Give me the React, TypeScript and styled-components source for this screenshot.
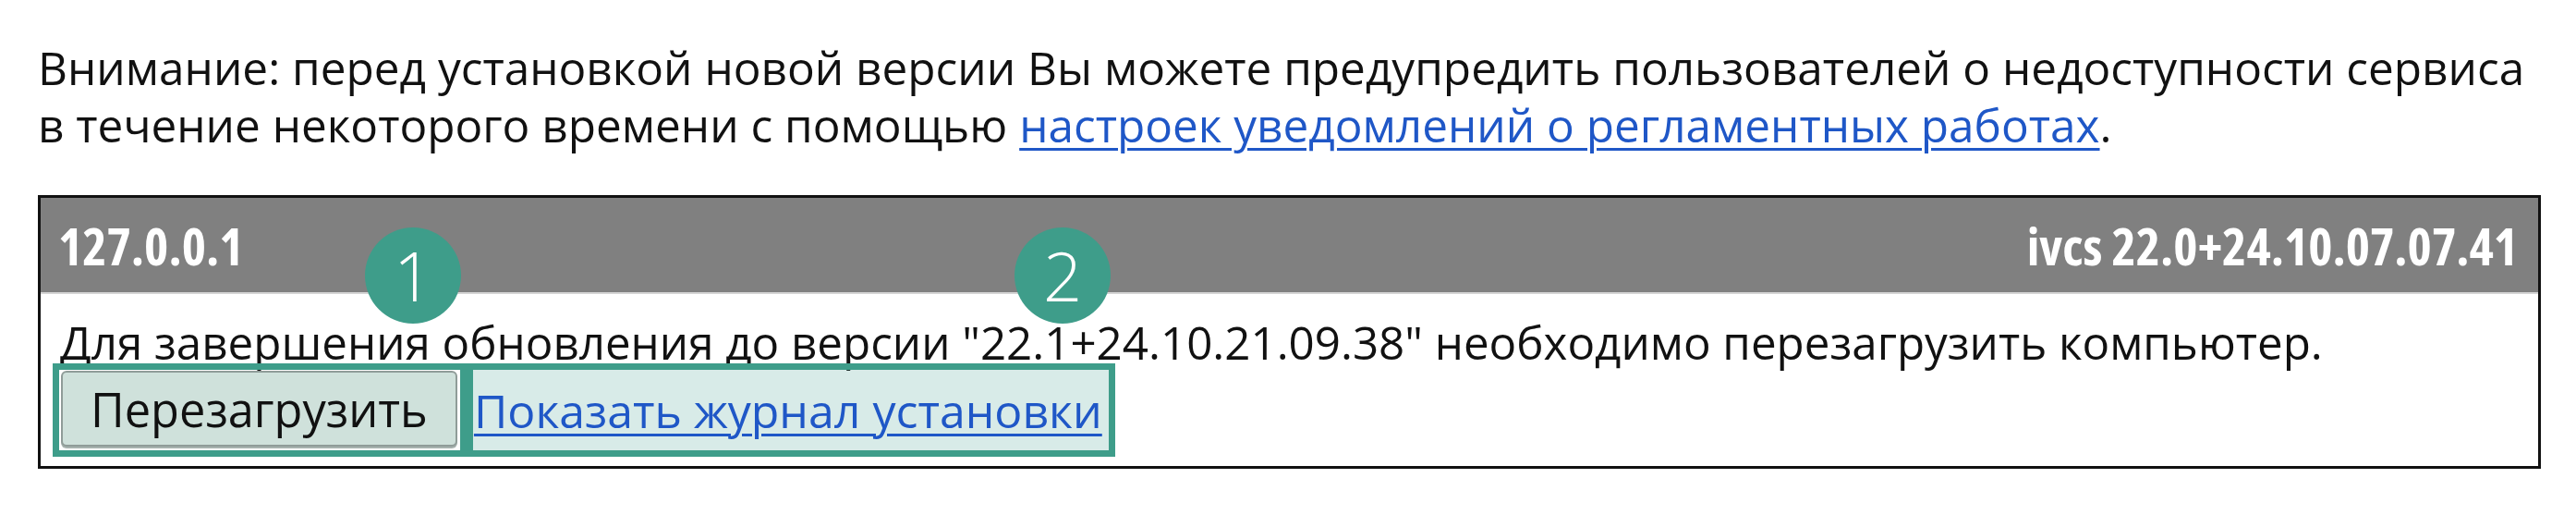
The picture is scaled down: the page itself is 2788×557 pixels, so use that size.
import React from 'react';
import styled, { createGlobalStyle } from 'styled-components';

const GlobalStyle = createGlobalStyle`
  body {
    margin: 0;
    background: #fff;
    font-family: 'Open Sans', 'Noto Sans', sans-serif;
    color: #111;
  }
`;

const TEAL = '#3e9d8a';
const TEAL_FILL = 'rgba(62, 157, 138, 0.2)';

const Page = styled.div`
  padding: 42px 38px 0 41px;
`;

const Notice = styled.p`
  margin: 0 0 45px;
  font-size: 49.5px;
  line-height: 62px;
  white-space: nowrap;
`;

const Link = styled.a`
  color: #1f57c7;
  text-decoration: underline;
  text-decoration-thickness: 3px;
  text-underline-offset: 6px;
  cursor: pointer;
`;

const HostBox = styled.div`
  position: relative;
  border: 3px solid #111;
  background: #fff;
`;

const HostHeader = styled.div`
  display: flex;
  justify-content: space-between;
  align-items: center;
  height: 102px;
  padding: 0 22px 0 19px;
  background: #808080;
  border-bottom: 2px solid #d4d4d4;
  color: #fff;
  font-size: 56px;
  font-weight: 700;
  font-stretch: 87%;
  line-height: 1;
`;

const HostBody = styled.div`
  padding: 27px 20px 10px 13px;
`;

const Message = styled.div`
  padding-left: 8px;
  font-size: 49.3px;
  line-height: 50px;
  white-space: nowrap;
`;

const Actions = styled.div`
  display: flex;
  margin-top: -2px;
`;

const Highlight = styled.div<{ $filled?: boolean }>`
  display: flex;
  align-items: center;
  height: 101px;
  box-sizing: border-box;
  border: 7px solid ${TEAL};
  background: ${(p) => (p.$filled ? TEAL_FILL : 'transparent')};
  padding: ${(p) => (p.$filled ? '0 7px 0 1px' : '1px 3px 4px 2px')};
`;

const Button = styled.button`
  height: 82px;
  padding: 0 30px;
  border: 2px solid #8f9c98;
  border-radius: 6px;
  background: #cfe1db;
  box-shadow: 0 2px 0 #a6b2ae;
  font-family: inherit;
  font-size: 50.5px;
  color: #111;
`;

const LogLink = styled(Link)`
  font-size: 50px;
`;

const Marker = styled.div<{ $left: number }>`
  position: absolute;
  top: 32px;
  left: ${(p) => p.$left}px;
  width: 104px;
  height: 104px;
  border-radius: 50%;
  background: ${TEAL};
  color: #fff;
  display: flex;
  align-items: center;
  justify-content: center;
  font-size: 74px;
  font-weight: 300;
  line-height: 1;
`;

export default function App() {
  return (
    <>
      <GlobalStyle />
      <Page>
        <Notice>
          Внимание: перед установкой новой версии Вы можете предупредить
          пользователей о недоступности сервиса
          <br />в течение некоторого времени с помощью{' '}
          <Link>настроек уведомлений о регламентных работах</Link>.
        </Notice>
        <HostBox>
          <HostHeader>
            <span>127.0.0.1</span>
            <span>ivcs 22.0+24.10.07.07.41</span>
          </HostHeader>
          <HostBody>
            <Message>
              Для завершения обновления до версии "22.1+24.10.21.09.38"
              необходимо перезагрузить компьютер.
            </Message>
            <Actions>
              <Highlight>
                <Button>Перезагрузить</Button>
              </Highlight>
              <Highlight $filled>
                <LogLink>Показать журнал установки</LogLink>
              </Highlight>
            </Actions>
          </HostBody>
          <Marker $left={351}>1</Marker>
          <Marker $left={1054}>2</Marker>
        </HostBox>
      </Page>
    </>
  );
}
